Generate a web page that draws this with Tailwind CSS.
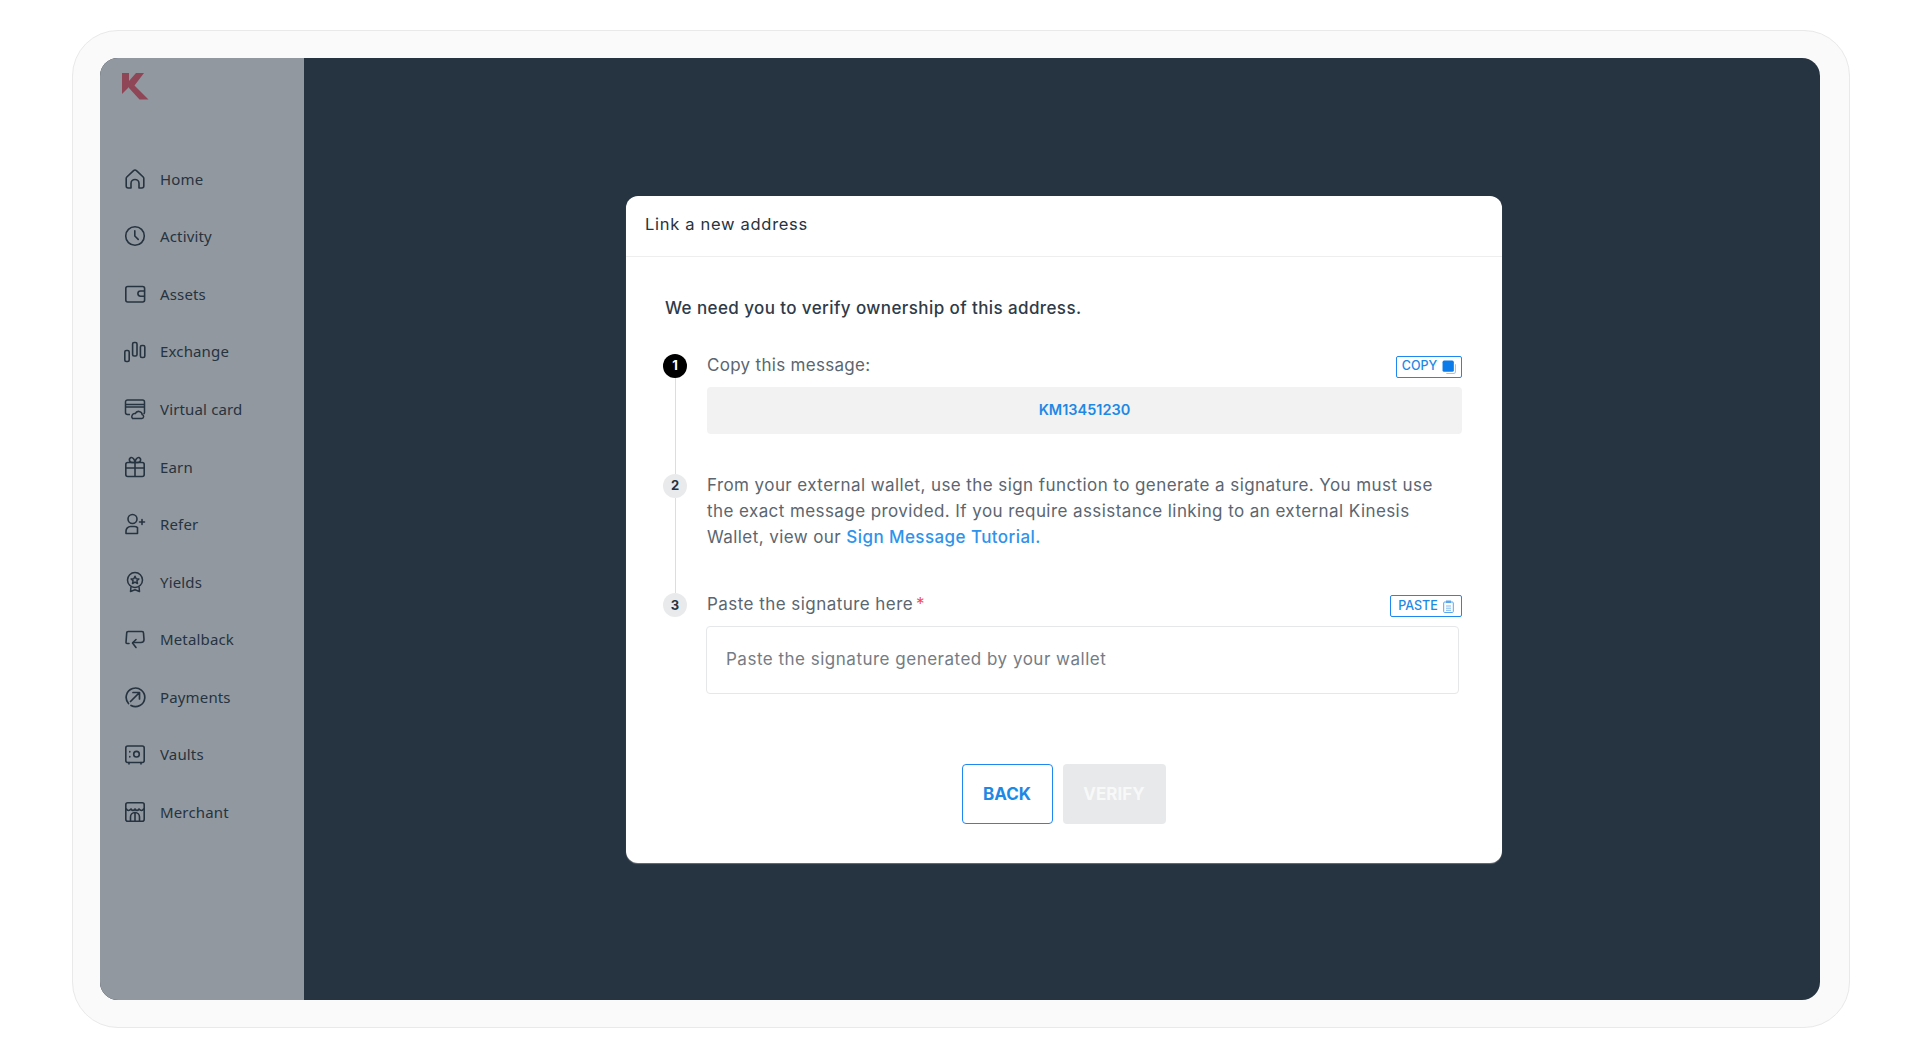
<!DOCTYPE html>
<html lang="en">
<head>
  <meta charset="UTF-8">
  <title>Link a new address</title>
  <script src="https://cdn.jsdelivr.net/npm/@tailwindcss/browser@4"></script>
</head>
<body class="bg-white font-['Inter',sans-serif]">
  <div class="h-[1058px] pt-[30px] pl-[72px] pr-[70px] pb-[30px]">
    <!-- Frame -->
    <div class="h-full rounded-[46px] border border-[#e9e9e9] bg-[#fafafa] pl-[27px] pr-[29px] py-[27px]">
      <div class="flex h-full overflow-hidden rounded-[18px] bg-[#263340]">

        <!-- Sidebar -->
        <aside class="w-[204px] shrink-0 bg-[#92989f] text-[#263340]">
          <svg class="ml-[22px] mt-[15px] h-[27px] w-[27px]" viewBox="0 0 27 27" fill="#8f4656">
            <polygon points="0,0 7,0 7,14 0,21"/>
            <polygon points="14,0 22,0 12.500,12.500 26.500,26.500 17.500,26.500 7,15 7,8"/>
          </svg>

          <nav class="mt-[50px] font-['Noto_Sans',sans-serif] text-[15px] tracking-[0.15px]">
            <a class="flex h-[57.6px] items-center pl-[24px]">
              <svg class="mr-[14px] h-[22px] w-[22px]" viewBox="0 0 22 22" fill="none" stroke="currentColor" stroke-width="1.6" stroke-linejoin="round"><path d="M2.8 9 9.3 2.8a2.5 2.5 0 0 1 3.4 0L19.2 9a2 2 0 0 1 .6 1.5V18a2 2 0 0 1-2 2H15v-4.5a4 4 0 0 0-8 0V20H4.200a2 2 0 0 1-2-2v-7.500A2 2 0 0 1 2.800 9z"/></svg>
              Home
            </a>
            <a class="flex h-[57.6px] items-center pl-[24px]">
              <svg class="mr-[14px] h-[22px] w-[22px]" viewBox="0 0 22 22" fill="none" stroke="currentColor" stroke-width="1.6" stroke-linecap="round"><circle cx="11" cy="11" r="9.300"/><path d="M10.800 5.800V11l3.400 3.400"/></svg>
              Activity
            </a>
            <a class="flex h-[57.6px] items-center pl-[24px]">
              <svg class="mr-[14px] h-[22px] w-[22px]" viewBox="0 0 22 22" fill="none" stroke="currentColor" stroke-width="1.6"><rect x="1.800" y="3.500" width="18.800" height="15.500" rx="2"/><path d="M20.500 8H16.500a2.600 2.600 0 0 0 0 5.200h4"/></svg>
              Assets
            </a>
            <a class="flex h-[57.6px] items-center pl-[24px]">
              <svg class="mr-[14px] h-[22px] w-[22px]" viewBox="0 0 22 22" fill="none" stroke="currentColor" stroke-width="1.6"><rect x="0.800" y="9.500" width="4.400" height="11" rx="1.500"/><rect x="8.600" y="1.500" width="4.400" height="13.500" rx="1.500"/><rect x="16.400" y="4.500" width="4.400" height="12" rx="1.500"/></svg>
              Exchange
            </a>
            <a class="flex h-[57.6px] items-center pl-[24px]">
              <svg class="mr-[14px] h-[22px] w-[22px]" viewBox="0 0 22 22" fill="none" stroke="currentColor" stroke-width="1.5" stroke-linejoin="round"><path d="M6 16.500H3.500a2 2 0 0 1-2-2V4a2 2 0 0 1 2-2h15a2 2 0 0 1 2 2v10.500a2 2 0 0 1-1 1.700"/><path d="M1.500 6.500h19M1.500 9h19"/><path d="M8.500 20.500h9.300a2 2 0 0 0 .4-3.900 3.600 3.600 0 0 0-6.900-1 3 3 0 0 0-2.800 4.900z"/></svg>
              Virtual card
            </a>
            <a class="flex h-[57.6px] items-center pl-[24px]">
              <svg class="mr-[14px] h-[22px] w-[22px]" viewBox="0 0 22 22" fill="none" stroke="currentColor" stroke-width="1.6" stroke-linejoin="round"><rect x="1.800" y="6.500" width="18.400" height="14" rx="2"/><path d="M1.800 12h18.400M11 6.500v14M11 6.500 8 6.500a2.600 2.600 0 0 1-1-5C9 1.200 11 4 11 6.500zM11 6.500h3a2.600 2.600 0 0 0 1-5C13 1.200 11 4 11 6.500z"/></svg>
              Earn
            </a>
            <a class="flex h-[57.6px] items-center pl-[24px]">
              <svg class="mr-[14px] h-[22px] w-[22px]" viewBox="0 0 22 22" fill="none" stroke="currentColor" stroke-width="1.6" stroke-linecap="round" stroke-linejoin="round"><circle cx="8.500" cy="6" r="4.500"/><path d="M2 20.500v-2.500a4.500 4.500 0 0 1 4.500-4.500h4a4.500 4.500 0 0 1 3 1.200V20.500z"/><path d="M18 6.500v5M15.500 9h5"/></svg>
              Refer
            </a>
            <a class="flex h-[57.6px] items-center pl-[24px]">
              <svg class="mr-[14px] h-[22px] w-[22px]" viewBox="0 0 22 22" fill="none" stroke="currentColor" stroke-width="1.500" stroke-linejoin="round"><circle cx="11" cy="9" r="7.500"/><path d="m11 5.200 1.200 2.500 2.700.3-2 1.800.6 2.700-2.500-1.400-2.500 1.400.6-2.700-2-1.800 2.700-.3z"/><path d="M7 15.500 6.500 20.500 11 18.800l4.500 1.700-.5-5"/></svg>
              Yields
            </a>
            <a class="flex h-[57.6px] items-center pl-[24px]">
              <svg class="mr-[14px] h-[22px] w-[22px]" viewBox="0 0 22 22" fill="none" stroke="currentColor" stroke-width="1.600" stroke-linecap="round" stroke-linejoin="round"><path d="M5 14.500H3a1 1 0 0 1-1-1l.7-9.500a1.500 1.500 0 0 1 1.500-1.500h13.800a1.500 1.500 0 0 1 1.500 1.500l.5 6.500a3 3 0 0 1-3 3H9"/><path d="M12 10.500 8.500 14l3.500 4.500"/></svg>
              Metalback
            </a>
            <a class="flex h-[57.6px] items-center pl-[24px]">
              <svg class="mr-[14px] h-[22px] w-[22px]" viewBox="0 0 22 22" fill="none" stroke="currentColor" stroke-width="1.700" stroke-linecap="round" stroke-linejoin="round"><path d="M4.500 17.500A9.300 9.300 0 1 1 7 19.500"/><path d="M6.500 15.500 15 7M9 6.500h6.500V13"/></svg>
              Payments
            </a>
            <a class="flex h-[57.6px] items-center pl-[24px]">
              <svg class="mr-[14px] h-[22px] w-[22px]" viewBox="0 0 22 22" fill="none" stroke="currentColor" stroke-width="1.600" stroke-linecap="round"><rect x="1.800" y="2" width="18.400" height="16.500" rx="2"/><circle cx="12.500" cy="10.200" r="2.800"/><path d="M5.800 7.500v.4M5.800 12.500v.4M5 18.500v1.500M17 18.500v1.500"/></svg>
              Vaults
            </a>
            <a class="flex h-[57.6px] items-center pl-[24px]">
              <svg class="mr-[14px] h-[22px] w-[22px]" viewBox="0 0 22 22" fill="none" stroke="currentColor" stroke-width="1.600" stroke-linejoin="round"><rect x="1.800" y="1.800" width="18.400" height="18.400" rx="2"/><path d="M2 7.500c1.500 2.500 3.500 2.500 5 .5 1.200 2 2.800 2 4 0 1.200 2 2.800 2 4 0 1.500 2 3.500 2 5-.5"/><path d="M6.500 20v-4a4.500 4.500 0 0 1 9 0v4M11 11.500V20"/></svg>
              Merchant
            </a>
          </nav>
        </aside>

        <!-- Modal area -->
        <main class="flex flex-1 items-center justify-center pl-[4px]">
          <div class="h-[667px] w-[876px] rounded-[12px] bg-white shadow-[0_1px_1px_rgba(255,255,255,0.3)]">
            <h2 class="flex h-[61px] items-center border-b border-[#eeeeee] pb-[3px] pl-[19px] text-[16.500px] font-normal tracking-[0.7px] text-[#263340]">Link a new address</h2>

            <div class="pl-[39px] pr-[40px]">
              <p class="mt-[40px] text-[17px] leading-[22px] font-medium tracking-[0.4px] text-[#2f3b48]">We need you to verify ownership of this address.</p>

              <!-- Step 1 -->
              <div class="relative mt-[35px] flex pl-[42px]">
                <span class="absolute left-[-2px] top-0 flex h-[24px] w-[24px] items-center justify-center rounded-full bg-black text-[13px] font-bold text-white">1</span>
                <span class="absolute left-[10px] top-[24px] h-[96px] w-px bg-[#dddddd]"></span>
                <div class="w-full">
                  <div class="flex h-[24px] items-start justify-between">
                    <span class="text-[17px] leading-[22px] tracking-[0.3px] text-[#5b6670]">Copy this message:</span>
                    <button class="mt-[2px] flex h-[22px] w-[66px] items-center justify-center gap-[5px] rounded-[2px] border border-[#1e88f0] text-[12.500px] font-medium text-[#1e88e5]">
                      COPY
                      <svg class="h-[14px] w-[14px]" viewBox="0 0 13 13"><path d="M4 12.500h7a1.500 1.500 0 0 0 1.500-1.500V4" fill="none" stroke="#9cc8f5"/><rect x="0.500" y="0.500" width="10.500" height="10.500" rx="1.500" fill="#0b7bea"/></svg>
                    </button>
                  </div>
                  <div class="mt-[9px] flex h-[47px] items-center justify-center rounded-[4px] bg-[#f2f2f2] text-[14.500px] font-semibold text-[#1e88e5]">KM13451230</div>
                </div>
              </div>

              <!-- Step 2 -->
              <div class="relative mt-[38px] flex pl-[42px]">
                <span class="absolute left-[-2px] top-[2px] flex h-[24px] w-[24px] items-center justify-center rounded-full bg-[#e9eaeb] text-[13px] font-bold text-[#263340]">2</span>
                <span class="absolute left-[10px] top-[26px] h-[95px] w-px bg-[#dddddd]"></span>
                <p class="text-[17px] leading-[26.300px] tracking-[0.42px] text-[#5b6670]">From your external wallet, use the sign function to generate a signature. You must use<br>the exact message provided. If you require assistance linking to an external Kinesis<br>Wallet, view our <a class="font-medium text-[#2f93ec]">Sign Message Tutorial.</a></p>
              </div>

              <!-- Step 3 -->
              <div class="relative mt-[41px] flex pl-[42px]">
                <span class="absolute left-[-2px] top-[2px] flex h-[24px] w-[24px] items-center justify-center rounded-full bg-[#e9eaeb] text-[13px] font-bold text-[#263340]">3</span>
                <div class="w-full">
                  <div class="flex h-[24px] items-start justify-between">
                    <span class="text-[17px] leading-[26px] tracking-[0.45px] text-[#5b6670]">Paste the signature here<span class="ml-[3px] text-[#ef4d5d]">*</span></span>
                    <button class="mt-[4px] flex h-[22px] w-[72px] items-center justify-center gap-[5px] rounded-[2px] border border-[#1e88f0] text-[12.500px] font-medium text-[#1e88e5]">
                      PASTE
                      <svg class="h-[13px] w-[11px]" viewBox="0 0 11 13" fill="none" stroke="#5aa6ee"><rect x="0.700" y="2" width="9.600" height="10.500" rx="1"/><rect x="3" y="0.500" width="5" height="2.500" fill="#5aa6ee" stroke="none"/><path d="M3 6h5M3 8.200h5M3 10.300h5" stroke-width="0.800"/></svg>
                    </button>
                  </div>
                  <input class="-ml-px mt-[11px] h-[68px] w-[753px] rounded-[4px] border border-[#e6e7e9] pb-[2px] pl-[19px] text-[17px] tracking-[0.5px] placeholder:text-[#757c84]" placeholder="Paste the signature generated by your wallet">
                </div>
              </div>

              <!-- Actions -->
              <div class="mt-[70px] flex justify-center gap-[10px]">
                <button class="h-[60px] w-[91px] rounded-[4px] border border-[#1e88f0] text-[17px] font-bold text-[#1e88e5]">BACK</button>
                <button class="h-[60px] w-[103px] rounded-[4px] bg-[#e8e9ea] text-[17px] font-bold text-[#f7f8f8]">VERIFY</button>
              </div>
            </div>
          </div>
        </main>
      </div>
    </div>
  </div>
</body>
</html>
